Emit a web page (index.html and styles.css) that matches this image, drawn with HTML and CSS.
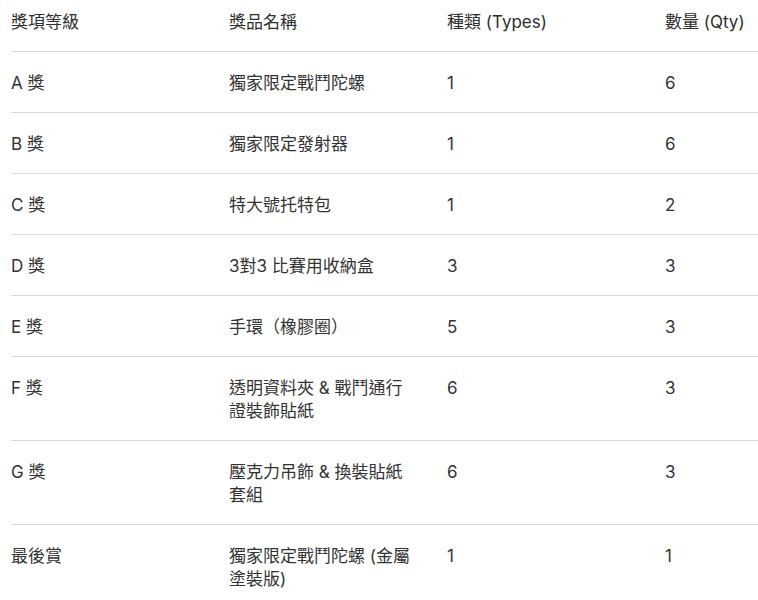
FILE: index.html
```html
<!DOCTYPE html>
<html lang="zh-Hant">
<head>
<meta charset="utf-8">
<link rel="stylesheet" href="styles.css">
</head>
<body>
<table class="prizes">
  <colgroup>
    <col class="c1"><col class="c2"><col class="c3"><col class="c4">
  </colgroup>
  <thead>
    <tr><th>獎項等級</th><th>獎品名稱</th><th>種類 (Types)</th><th>數量 (Qty)</th></tr>
  </thead>
  <tbody>
    <tr><td>A 獎</td><td>獨家限定戰鬥陀螺</td><td>1</td><td>6</td></tr>
    <tr><td>B 獎</td><td>獨家限定發射器</td><td>1</td><td>6</td></tr>
    <tr><td>C 獎</td><td>特大號托特包</td><td>1</td><td>2</td></tr>
    <tr><td>D 獎</td><td>3對3 比賽用收納盒</td><td>3</td><td>3</td></tr>
    <tr><td>E 獎</td><td>手環（橡膠圈）</td><td>5</td><td>3</td></tr>
    <tr><td>F 獎</td><td>透明資料夾 &amp; 戰鬥通行證裝飾貼紙</td><td>6</td><td>3</td></tr>
    <tr><td>G 獎</td><td>壓克力吊飾 &amp; 換裝貼紙套組</td><td>6</td><td>3</td></tr>
    <tr class="last"><td>最後賞</td><td>獨家限定戰鬥陀螺 (金屬塗裝版)</td><td>1</td><td>1</td></tr>
  </tbody>
</table>
</body>
</html>
```

FILE: styles.css
```css
html, body {
  margin: 0;
  padding: 0;
  background: #ffffff;
}
body {
  font-family: "Inter", "Noto Sans CJK TC", sans-serif;
  font-size: 17px;
  line-height: 23px;
  color: #333333;
  overflow: hidden;
}
.prizes {
  margin-left: 11px;
  width: 747px;
  border-collapse: collapse;
  table-layout: fixed;
}
.c1, .c2, .c3 { width: 218px; }
.c4 { width: 93px; }
.prizes th,
.prizes td {
  text-align: left;
  vertical-align: top;
  font-weight: 400;
  padding: 20px 28px 17px 0;
  border-bottom: 1px solid #d9d9d9;
}
.prizes th {
  padding-top: 11px;
  padding-bottom: 17px;
  color: #2e2e2e;
  white-space: nowrap;
}
.prizes td:last-child,
.prizes th:last-child {
  padding-right: 0;
}
.prizes tr.last td {
  padding-bottom: 12px;
}
```
